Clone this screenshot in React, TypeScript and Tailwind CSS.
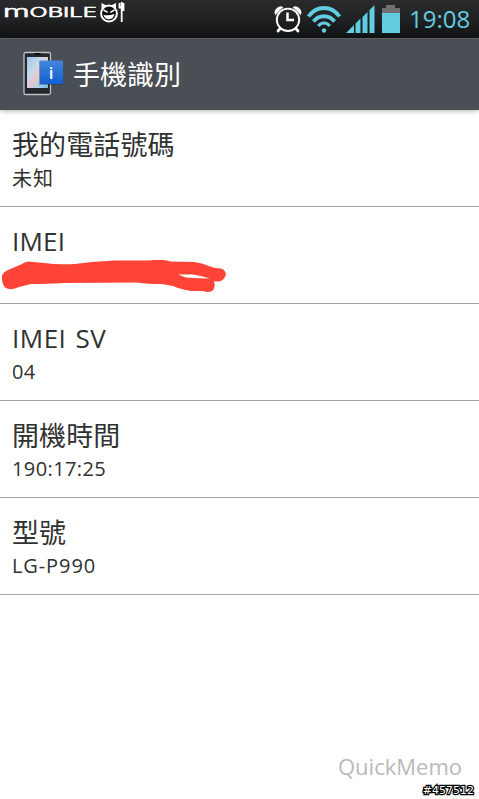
type Row = {
  label: string;
  value?: string;
  labelClass?: string;
  valueClass?: string;
};

const cjkLabel = "text-[27px] tracking-[0.1px] pt-px -mb-px";

const rows: Row[] = [
  { label: "我的電話號碼", value: "未知", labelClass: cjkLabel, valueClass: "tracking-[1px] pt-px" },
  { label: "IMEI", labelClass: "text-[26px] tracking-[0.2px]" },
  { label: "IMEI SV", value: "04", labelClass: "text-[26px] tracking-[0.5px] [word-spacing:2px]", valueClass: "tracking-[0.4px]" },
  { label: "開機時間", value: "190:17:25", labelClass: cjkLabel, valueClass: "tracking-[0.4px]" },
  { label: "型號", value: "LG-P990", labelClass: cjkLabel, valueClass: "tracking-[0.9px]" },
];

function MobileLogo() {
  return (
    <svg width="130" height="26" viewBox="0 0 130 26" className="shrink-0" aria-label="Mobile01">
      <text
        x="3"
        y="17"
        fontSize="12.500"
        fontWeight="300"
        fill="#fff"
        stroke="#fff"
        strokeWidth="0.600"
        textLength="94"
        lengthAdjust="spacingAndGlyphs"
        className="font-['Inter',sans-serif]"
      >
        <tspan fontSize="16">m</tspan>OBILE
      </text>
      <path d="M101.500 9.500 101.500 3l5 2.500zM116 9.500V3l-5 2.500z" fill="#fff" />
      <circle cx="109" cy="13.500" r="7.900" fill="#111" stroke="#fff" strokeWidth="2" />
      <path d="M103.500 10 107.700 12.300M114.500 10 110.300 12.300" stroke="#fff" strokeWidth="1.500" />
      <path d="M103.500 15q5.500 1 11-1-1 5.200-5.500 5.200-4.500 0-5.500-4.200z" fill="#fff" />
      <path d="M119.500 3v4.500h2.200M123.500 3v8M121.700 2v20" stroke="#fff" strokeWidth="1.800" fill="none" />
    </svg>
  );
}

function AlarmIcon() {
  return (
    <svg width="28" height="28" viewBox="0 0 28 28" fill="none" stroke="#fff" strokeLinecap="round">
      <path d="M1.300 9.300C-.6 5 5 .2 8.700 2.300zM26.700 9.300C28.600 5 23 .2 19.300 2.300z" fill="#fff" stroke="#fff" strokeWidth="0.800" />
      <circle cx="14" cy="14.800" r="11.200" strokeWidth="1.900" />
      <path d="M13.500 7.500V15H20" strokeWidth="2.500" strokeLinecap="butt" />
      <path d="M6.200 23.500 4 26M21.800 23.500 24 26" strokeWidth="2.800" />
    </svg>
  );
}

function WifiIcon() {
  return (
    <svg width="34" height="27" viewBox="0 0 34 27" fill="none" stroke="#62cde0" strokeWidth="3.800">
      <path d="M1.500 10.500C9.500-.8 24.500-.8 32.500 10.500" />
      <path d="M6.500 15.500c5.300-7 15.700-7 21 0" />
      <path d="M11.300 20c3-4 8.400-4 11.400 0" strokeWidth="3.200" />
      <circle cx="17" cy="24.500" r="2.200" fill="#62cde0" stroke="none" />
    </svg>
  );
}

function SignalIcon() {
  return (
    <svg width="29" height="28" viewBox="0 0 29 28" fill="#62cde0">
      <path d="M0 28l8-8v8zM9.500 18.500 14.500 13.500V28h-5zM16.500 12 21.500 7v21h-5zM23.500 5 28.500 0v28h-5z" />
    </svg>
  );
}

function BatteryIcon() {
  return (
    <svg width="18" height="28" viewBox="0 0 18 28">
      <path d="M4 0h9v3h5v5H0V3h4z" fill="#707070" />
      <path d="M0 8h18v20H0z" fill="#62cde0" />
    </svg>
  );
}

function StatusBar() {
  return (
    <header className="flex h-[39px] items-start border-b border-[#66696c] bg-linear-to-b from-[#292b2d] via-[#202224] to-[#111213]">
      <MobileLogo />
      <div className="ml-36 mt-[5px] flex shrink-0">
        <AlarmIcon />
      </div>
      <div className="ml-[5px] mt-[6px] shrink-0">
        <WifiIcon />
      </div>
      <div className="ml-[5px] mt-[5px] shrink-0">
        <SignalIcon />
      </div>
      <div className="ml-[7px] mt-[5px] shrink-0">
        <BatteryIcon />
      </div>
      <time className="ml-[9px] mt-[5px] whitespace-nowrap font-['Open_Sans',sans-serif] text-[24px] leading-[28px] text-[#62cde0]">
        19:08
      </time>
    </header>
  );
}

function PhoneInfoIcon() {
  return (
    <svg width="40" height="46" viewBox="0 0 40 46" className="shrink-0">
      <defs>
        <linearGradient id="screen" x1="0" y1="0" x2="1" y2="1">
          <stop offset="0" stopColor="#9bc5e6" />
          <stop offset="0.350" stopColor="#c6d9e9" />
          <stop offset="0.550" stopColor="#e6c8d2" />
          <stop offset="0.750" stopColor="#a8d2e8" />
          <stop offset="1" stopColor="#75b8df" />
        </linearGradient>
        <linearGradient id="badge" x1="0" y1="0" x2="0" y2="1">
          <stop offset="0" stopColor="#4386dc" />
          <stop offset="1" stopColor="#1260d2" />
        </linearGradient>
      </defs>
      <rect x="1" y="1.500" width="26.500" height="42" rx="1.500" fill="#24282c" stroke="#bfc2c5" strokeWidth="1.300" />
      <path d="M11 2h7l-1.500 2h-4z" fill="#090a0b" />
      <path d="M4 6h21v31H4z" fill="url(#screen)" />
      <path d="M16 10h24v24H16z" fill="#20334c" opacity="0.400" />
      <rect x="17" y="9.500" width="23" height="23.500" rx="1" fill="url(#badge)" />
      <text x="28" y="27.500" textAnchor="middle" fontSize="17" fontWeight="600" fill="#fff" className="font-['Open_Sans',sans-serif]">
        i
      </text>
    </svg>
  );
}

function TitleBar() {
  return (
    <div className="flex h-[71px] items-center bg-[#4a4e55] pb-0.5 pl-[23px] shadow-[0_1px_5px_rgba(0,0,0,0.3)]">
      <PhoneInfoIcon />
      <h1 className="ml-[10px] font-['Noto_Sans_CJK_TC',sans-serif] text-[27px] leading-9 text-white">
        手機識別
      </h1>
    </div>
  );
}

// hand-drawn marker stroke over the serial number
function Scribble() {
  return (
    <svg width="230" height="38" viewBox="0 0 230 38" className="-ml-3 mt-px" aria-hidden="true">
      <path
        fill="#ff4337"
        fillRule="evenodd"
        d="M2 16Q3 12 8 10L21 4.500Q27 0 33 2L44 3Q58 5 75 4L92 2Q106 1 115 .500L150 .500Q161-1.500 170 1.500L194 2Q202 3 209 6L215 8Q218 8 221 8.500Q227 11 225.500 16Q223 22 216 21.500L214 21Q216 28 212 31Q208 33 203 31L191 31Q180 29 173 26L162 24Q148 24 137 22.500L64 23Q45 24 31 24L19 27Q11 31 5 27.500Q1.500 23 2 16ZM178 14.500L186 17.500Q197 18.500 210 18.500Q202 16 193 14.500Z"
      />
    </svg>
  );
}

export default function App() {
  return (
    <div className="flex h-[799px] w-[479px] flex-col overflow-hidden bg-white font-['Open_Sans','Noto_Sans_CJK_TC',sans-serif] text-[#303231]">
      <StatusBar />
      <TitleBar />

      <main className="flex-1">
        <ul>
          {rows.map((row) => (
            <li key={row.label} className="h-[97px] border-b border-[#a3a8a6] pl-3 pt-4">
              <h2 className={`leading-9 ${row.labelClass}`}>{row.label}</h2>
              {row.value ? (
                <p className={`mt-0.5 text-[20px] leading-7 ${row.valueClass}`}>{row.value}</p>
              ) : (
                <Scribble />
              )}
            </li>
          ))}
        </ul>
      </main>

      <footer className="flex flex-col items-end">
        <span className="mr-[17px] text-[22px] leading-7 text-[#b9b9b9]">QuickMemo</span>
        <span className="mr-[5px] mt-[3px] font-['DejaVu_Sans',sans-serif] text-[11px] leading-4 text-white [paint-order:stroke_fill] [-webkit-text-stroke:2.5px_black]">
          #457512
        </span>
      </footer>
    </div>
  );
}
